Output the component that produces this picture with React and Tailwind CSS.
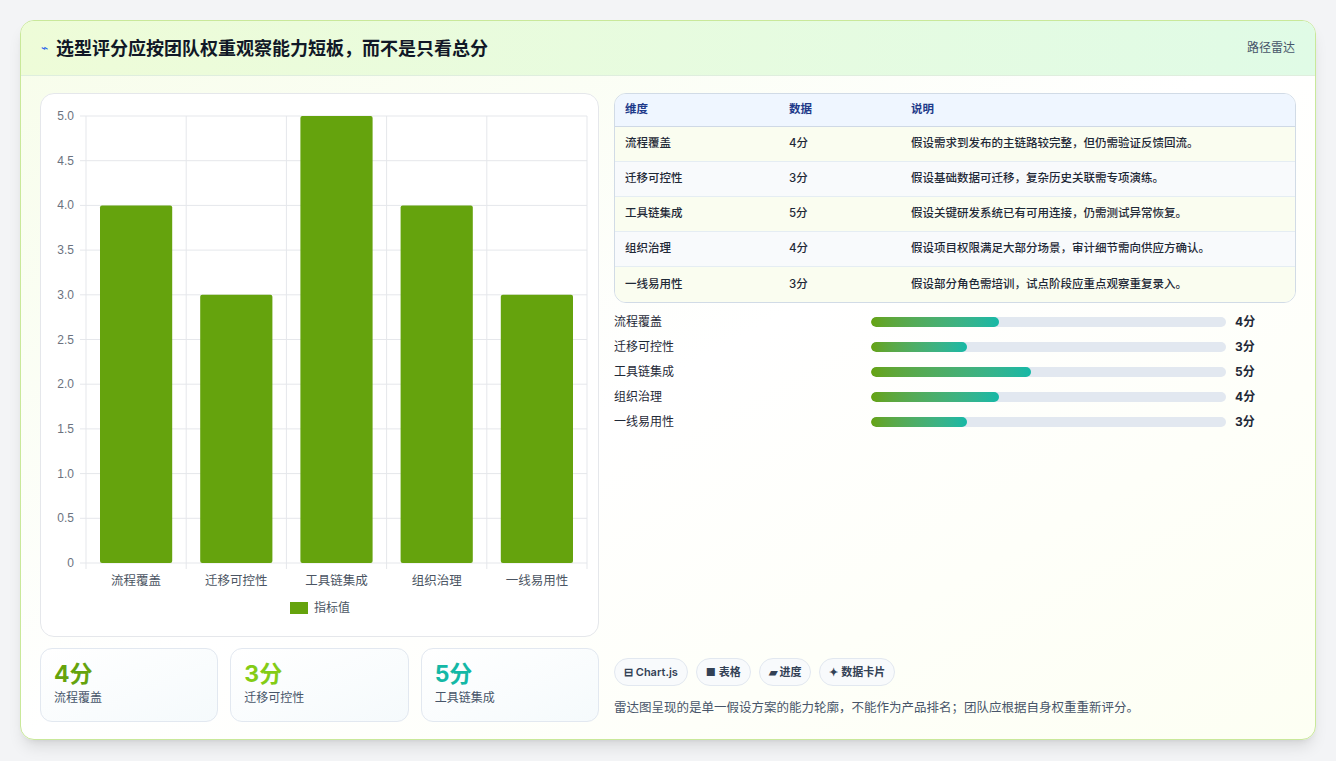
import React from "react";

const data = [
  { n: "流程覆盖", v: 4, d: "假设需求到发布的主链路较完整，但仍需验证反馈回流。" },
  { n: "迁移可控性", v: 3, d: "假设基础数据可迁移，复杂历史关联需专项演练。" },
  { n: "工具链集成", v: 5, d: "假设关键研发系统已有可用连接，仍需测试异常恢复。" },
  { n: "组织治理", v: 4, d: "假设项目权限满足大部分场景，审计细节需向供应方确认。" },
  { n: "一线易用性", v: 3, d: "假设部分角色需培训，试点阶段应重点观察重复录入。" },
];

function Chart() {
  const x0 = 45, x1 = 546, y0 = 22, y1 = 469;
  const ticks = [5, 4.5, 4, 3.5, 3, 2.5, 2, 1.5, 1, 0.5, 0];
  const cw = (x1 - x0) / 5;
  return (
    <svg width="558" height="543" className="block">
      {ticks.map((t) => {
        const y = y1 - (t / 5) * (y1 - y0);
        return (
          <g key={t}>
            <line x1={x0 - 6} x2={x1} y1={y} y2={y} stroke="#e5e7eb" />
            <text x={x0 - 12} y={y + 4} textAnchor="end" fontSize="12" fill="#6b7280" fontFamily="Liberation Sans, sans-serif">{t.toFixed(t === 0 ? 0 : 1)}</text>
          </g>
        );
      })}
      {[0, 1, 2, 3, 4, 5].map((i) => (
        <line key={i} x1={x0 + i * cw} x2={x0 + i * cw} y1={y0} y2={y1 + 6} stroke="#e5e7eb" />
      ))}
      {data.map((d, i) => {
        const h = (d.v / 5) * (y1 - y0);
        return (
          <g key={i}>
            <rect x={x0 + i * cw + 14} y={y1 - h} width={cw - 28} height={h} rx="2" fill="#65a30d" />
            <text x={x0 + i * cw + cw / 2} y={y1 + 22} textAnchor="middle" fontSize="12.5" fill="#4b5563" fontFamily="Noto Sans CJK SC, sans-serif">{d.n}</text>
          </g>
        );
      })}
      <rect x="249" y="508" width="18" height="12" fill="#65a30d" />
      <text x="273" y="518" fontSize="12" fill="#4b5563" fontFamily="Noto Sans CJK SC, sans-serif">指标值</text>
    </svg>
  );
}

export default function App() {
  return (
    <div className="min-h-[761px] bg-[#f3f4f6] p-[20px] pb-[20px]" style={{ fontFamily: "Inter, 'Noto Sans CJK SC', sans-serif" }}>
      <div className="h-[720px] rounded-[14px] border border-[#c9e89a] bg-gradient-to-br from-[#f7fdea] via-white to-[#fdfff3] overflow-hidden shadow-lg flex flex-col">
        <div className="h-[55px] flex items-center justify-between px-[20px] bg-gradient-to-r from-[#eefcd8] to-[#e0fbe6] border-b border-[#dfeede]">
          <div className="flex items-center gap-[8px]">
            <span className="text-[#2563eb] text-[12px]">⌁</span>
            <span className="text-[18px] font-bold text-[#111827]">选型评分应按团队权重观察能力短板，而不是只看总分</span>
          </div>
          <span className="text-[12px] text-[#475569]">路径雷达</span>
        </div>
        <div className="flex-1 flex gap-[15px] px-[19px] pt-[17px]">
          <div className="w-[559px] flex flex-col gap-[11px]">
            <div className="h-[544px] rounded-[14px] border border-[#e5e7eb] bg-white"><Chart /></div>
            <div className="flex gap-[12px]">
              {data.slice(0, 3).map((d, i) => (
                <div key={i} className="flex-1 h-[74px] rounded-[12px] border border-[#e2e8f0] bg-gradient-to-br from-white to-[#f5fafc] px-[13px] pt-[10px]">
                  <div className={`text-[23px] font-bold leading-[30px] ${i === 2 ? "text-[#14b8a6]" : i === 1 ? "text-[#84cc16]" : "text-[#65a30d]"}`}>{d.v}分</div>
                  <div className="text-[12px] text-[#475569]">{d.n}</div>
                </div>
              ))}
            </div>
          </div>
          <div className="flex-1 flex flex-col pr-[0px]">
            <div className="rounded-[12px] border border-[#d1dbe6] overflow-hidden text-[11.5px]">
              <div className="flex h-[33px] items-center bg-[#eff6ff] border-b border-[#cfd9e6] text-[#1e3a8a] font-semibold px-[10px]">
                <div className="w-[164px]">维度</div><div className="w-[122px]">数据</div><div>说明</div>
              </div>
              {data.map((d, i) => (
                <div key={i} className={`flex h-[35px] items-center px-[10px] text-[#1f2937] font-medium ${i % 2 ? "bg-[#f8fafc]" : "bg-[#fafdf0]"} ${i < 4 ? "border-b border-[#e5edf3]" : ""}`}>
                  <div className="w-[164px]">{d.n}</div><div className="w-[122px]">{d.v}分</div><div>{d.d}</div>
                </div>
              ))}
            </div>
            <div className="mt-[10px] flex flex-col gap-[7px]">
              {data.map((d, i) => (
                <div key={i} className="flex items-center h-[18px] text-[12px]">
                  <div className="w-[257px] text-[#1f2937]">{d.n}</div>
                  <div className="w-[355px] h-[10px] rounded-full bg-[#e2e8f0] overflow-hidden">
                    <div className="h-full rounded-full bg-gradient-to-r from-[#65a30d] to-[#14b8a6]" style={{ width: `${d.v * 9}%` }} />
                  </div>
                  <div className="ml-[9px] font-bold text-[#1f2937]">{d.v}分</div>
                </div>
              ))}
            </div>
            <div className="mt-auto mb-[21px]">
              <div className="flex gap-[8px] text-[11px] font-semibold text-[#334155]">
                {["⊟ Chart.js", "■ 表格", "▰ 进度", "✦ 数据卡片"].map((c) => (
                  <span key={c} className="h-[28px] px-[9px] flex items-center rounded-full border border-[#e2e8f0] bg-[#f8fafc]">{c}</span>
                ))}
              </div>
              <div className="mt-[13px] text-[12.5px] text-[#475569]">雷达图呈现的是单一假设方案的能力轮廓，不能作为产品排名；团队应根据自身权重重新评分。</div>
            </div>
          </div>
        </div>
      </div>
    </div>
  );
}
